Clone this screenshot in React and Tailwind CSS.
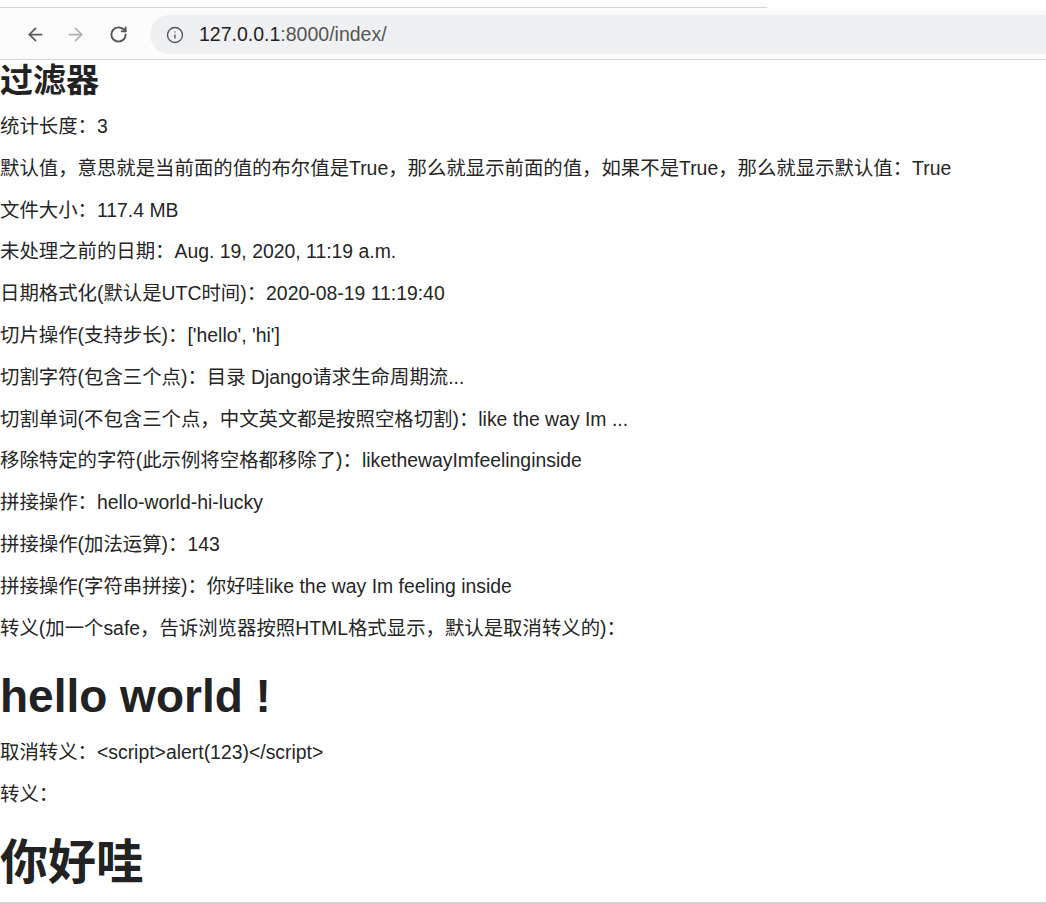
import React from 'react';
import { ArrowLeft, ArrowRight, RotateCw, Info } from 'lucide-react';

const lines = [
  '统计长度：3',
  '默认值，意思就是当前面的值的布尔值是True，那么就显示前面的值，如果不是True，那么就显示默认值：True',
  '文件大小：117.4 MB',
  '未处理之前的日期：Aug. 19, 2020, 11:19 a.m.',
  '日期格式化(默认是UTC时间)：2020-08-19 11:19:40',
  "切片操作(支持步长)：['hello', 'hi']",
  '切割字符(包含三个点)：目录 Django请求生命周期流...',
  '切割单词(不包含三个点，中文英文都是按照空格切割)：like the way Im ...',
  '移除特定的字符(此示例将空格都移除了)：likethewayImfeelinginside',
  '拼接操作：hello-world-hi-lucky',
  '拼接操作(加法运算)：143',
  '拼接操作(字符串拼接)：你好哇like the way Im feeling inside',
  '转义(加一个safe，告诉浏览器按照HTML格式显示，默认是取消转义的)：',
];

const App = () => {
  return (
    <div className="min-h-screen bg-white font-['Liberation_Sans','Noto_Sans_CJK_SC',sans-serif] text-[#262626]">
      {/* Browser chrome */}
      <div className="h-[8px] w-[767px] border-b border-[#d6d6d6]" />
      <div className="flex h-[52px] items-center border-b border-[#d4d4d4] bg-[#fcfcfd] pt-[2px]">
        <div className="flex w-[150px] items-center pl-[25px]">
          <ArrowLeft className="h-[21px] w-[21px] text-[#5a5a5a]" strokeWidth={2} />
          <ArrowRight className="ml-[19px] h-[21px] w-[21px] text-[#b0b0b0]" strokeWidth={2} />
          <RotateCw className="ml-[23px] h-[19px] w-[19px] text-[#555]" strokeWidth={2.4} />
        </div>
        <div className="flex h-[39px] flex-1 items-center rounded-l-full bg-[#eff0f2] pl-[16px]">
          <Info className="h-[18px] w-[18px] text-[#555]" strokeWidth={1.8} />
          <span className="ml-[15px] text-[19.5px]">
            <span className="text-[#1f1f1f]">127.0.0.1</span>
            <span className="text-[#555]">:8000/index/</span>
          </span>
        </div>
      </div>

      {/* Page */}
      <div className="flex flex-col">
        <h2 className="mt-[3px] text-[33px] font-bold leading-[36px] text-[#222]">过滤器</h2>
        <div className="mt-[14px] flex flex-col gap-[15.8px]">
          {lines.map((t, i) => (
            <p key={i} className="text-[19.4px] leading-[26px]">{t}</p>
          ))}
        </div>
        <h1 className="mt-[27px] text-[46px] font-bold leading-[56px] text-[#222]">hello world !</h1>
        <p className="mt-[15px] text-[19.4px] leading-[26px]">取消转义：&lt;script&gt;alert(123)&lt;/script&gt;</p>
        <p className="mt-[16px] text-[19.4px] leading-[26px]">转义：</p>
        <h1 className="mt-[28px] text-[48px] font-bold leading-[56px] text-[#222]">你好哇</h1>
        <div className="mt-[11px] border-b-2 border-[#d0d0d0]" />
      </div>
    </div>
  );
};

export default App;
